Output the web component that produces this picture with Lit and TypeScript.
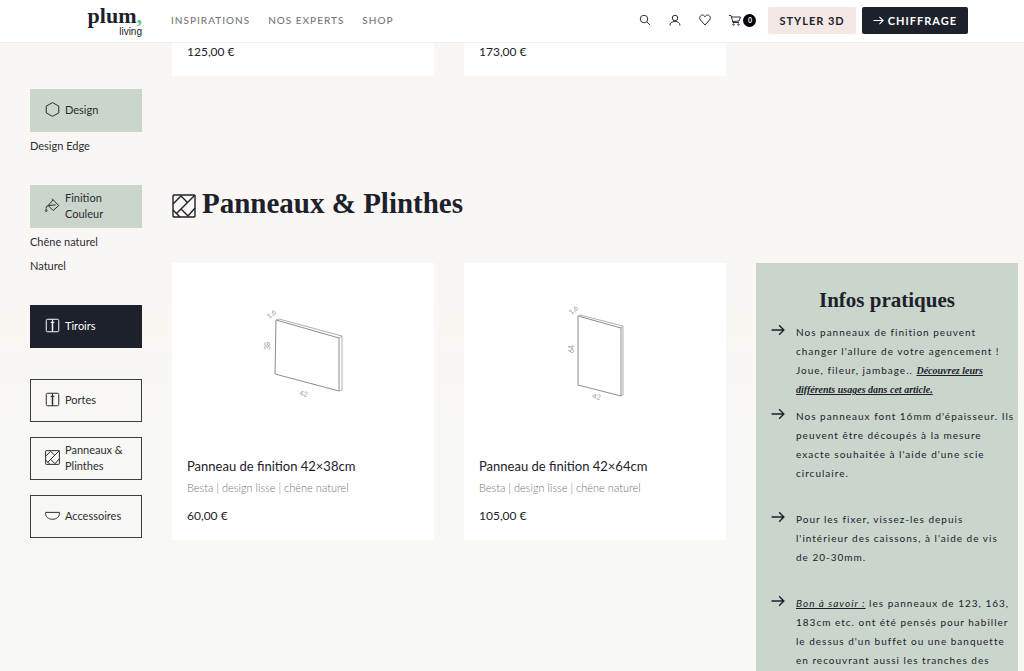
import { LitElement, html, css, svg } from "lit";
import { customElement } from "lit/decorators.js";
import { classMap } from "lit/directives/class-map.js";

const icons = {
  hexagon: svg`<path d="M12 1 22 6.500V17.500L12 23 2 17.500V6.500Z"/>`,
  bucket: svg`<path d="M13 3 22 12 13 20 5 12ZM13 3 11 1M5 12 17 11M6 12 2 14v3"/><circle cx="2" cy="20" r="1.500"/>`,
  door: svg`<rect x="2" y="2" width="20" height="20" rx="2"/><path d="M12 2v20M9 7h6M12 5v7" /><path d="M12 5v15" stroke-width="2.400"/>`,
  panel: svg`<rect x="1" y="1" width="22" height="22" rx="1"/><path d="M1 10 9 2 15 8M23 1 4 20M1 16 8 23M9 15 16 22 23 14"/>`,
  bowl: svg`<path d="M1 7H23V9C23 14 19 18 12 18S1 14 1 9Z"/>`,
  search: svg`<circle cx="10" cy="10" r="7.500"/><path d="m16 16 6 6"/>`,
  user: svg`<circle cx="12" cy="8" r="5.500"/><path d="M2 23c0-6 5-8 10-8s10 2 10 8"/>`,
  heart: svg`<path d="M12 22 3 12C-1 7 3 2 7 2c3 0 4 2 5 4 1-2 2-4 5-4 4 0 8 5 4 10Z"/>`,
  cart: svg`<path d="M0 3h4l4 14h12M5 6h18l-3 8-13 1"/><circle cx="9" cy="21" r="1.500"/><circle cx="19" cy="21" r="1.500"/>`,
  arrow: svg`<path d="M1 12H22M14 4 22 12 14 20"/>`,
};

type IconName = keyof typeof icons;

const icon = (name: IconName) =>
  html`<svg class="icon" viewBox="0 0 24 24" aria-hidden="true">${icons[name]}</svg>`;

interface Product {
  title: string;
  detail: string;
  price: string;
  front: string;
  side: string;
  labels: { text: string; x: number; y: number; turn: number }[];
}

const products: Product[] = [
  {
    title: "Panneau de finition 42×38cm",
    detail: "Besta | design lisse | chêne naturel",
    price: "60,00 €",
    front: "M104 57 167 75V128L103 111Z",
    side: "M104 57 107 56 170 73V127L167 128M167 75 170 73",
    labels: [
      { text: "1,6", x: 101, y: 53, turn: -40 },
      { text: "38", x: 98, y: 83, turn: -90 },
      { text: "42", x: 131, y: 133, turn: 15 },
    ],
  },
  {
    title: "Panneau de finition 42×64cm",
    detail: "Besta | design lisse | chêne naturel",
    price: "105,00 €",
    front: "M114 53 157 65V133L114 122Z",
    side: "M114 53 116 52 159 63V132L157 133M157 65 159 63",
    labels: [
      { text: "1,6", x: 111, y: 49, turn: -40 },
      { text: "64", x: 110, y: 86, turn: -90 },
      { text: "42", x: 132, y: 136, turn: 15 },
    ],
  },
];

@customElement("app-root")
export class AppRoot extends LitElement {
  static styles = css`
    :host {
      display: flex;
      flex-direction: column;
      height: 100vh;
      overflow: hidden;
      font-family: Lato, "Open Sans", sans-serif;
      font-size: 11px;
      color: #1c212b;
      background: linear-gradient(#faf6f3 45%, #f8f8f4 65%);
    }
    * { box-sizing: border-box; }
    a { color: inherit; text-decoration: none; }
    h2, h3, p, ul { margin: 0; padding: 0; }
    ul { list-style: none; }
    .icon {
      flex: none;
      width: 15px;
      height: 15px;
      fill: none;
      stroke: currentColor;
      stroke-width: 1.6;
      overflow: visible;
    }

    .header {
      flex: none;
      display: flex;
      align-items: center;
      height: 43px;
      padding: 0 56px 2px 89px;
      background: #fff;
      border-bottom: 1px solid #eeeeee;
    }
    .logo {
      display: flex;
      flex-direction: column;
      align-items: flex-end;
      width: 53px;
      margin-right: 29px;
    }
    .wordmark {
      font: bold 22px/24px "Liberation Serif", serif;
      white-space: nowrap;
    }
    .comma { color: #6dbfa4; }
    .living { font: 10px/8px "Liberation Sans", sans-serif; }
    .menu { display: flex; gap: 18px; flex: 1; }
    .menu a { font-size: 10px; font-weight: 500; letter-spacing: 1px; color: #77777a; white-space: nowrap; }
    .tools { display: flex; align-items: center; gap: 18px; margin-right: 12px; }
    .tool {
      display: flex;
      align-items: center;
      gap: 2px;
      padding: 0;
      border: 0;
      background: none;
      color: #2c2f36;
    }
    .tool .icon { width: 12px; height: 12px; stroke-width: 2; }
    .count {
      width: 13px;
      border-radius: 50%;
      background: #000;
      color: #fff;
      font: bold 7px/13px Lato, sans-serif;
      text-align: center;
    }
    .cta {
      display: flex;
      align-items: center;
      gap: 4px;
      height: 27px;
      padding: 0 11px;
      border-radius: 2px;
      background: #f4e8e6;
      font-size: 11px;
      font-weight: bold;
      letter-spacing: 1px;
      white-space: nowrap;
    }
    .cta.dark { margin-left: 6px; background: #1c212b; color: #fff; }
    .cta .icon { width: 11px; height: 11px; stroke-width: 2.4; }

    .page {
      flex: 1;
      display: grid;
      grid-template-columns: 112px minmax(0, 1fr);
      gap: 30px;
      padding: 0 6px 0 30px;
    }
    .side { padding-top: 46px; color: #2a2d33; }
    .group { margin-bottom: 27px; }
    .group li { line-height: 24px; }
    .group ul { padding-top: 2px; }
    .tile {
      display: flex;
      align-items: center;
      gap: 5px;
      height: 43px;
      padding: 0 14px 2px;
      line-height: 16px;
      border: 1px solid #3a3d44;
    }
    .tile.green { background: #cad6cc; border-color: #cad6cc; }
    .tile.dark { background: #1c212b; border-color: #1c212b; color: #fff; }
    .links { display: flex; flex-direction: column; gap: 15px; padding-top: 4px; }

    .row { display: grid; grid-template-columns: repeat(3, minmax(0, 1fr)); gap: 30px; align-items: start; }
    .card { background: #fff; padding: 0 15px 14px; }
    .card.tail { padding-bottom: 15px; }
    .drawing { display: block; height: 192px; margin: 0 auto; overflow: visible; fill: none; }
    .front { stroke: #8d8d8d; }
    .edge { stroke: #b0b0b0; }
    .dim { fill: #999; font: 7px Lato, sans-serif; text-anchor: middle; }
    .name { font-size: 13px; line-height: 23px; font-weight: normal; white-space: nowrap; }
    .detail { font-size: 11px; line-height: 20px; font-weight: 300; color: #74747e; white-space: nowrap; }
    .price { font-size: 12px; line-height: 20px; }
    .name + .detail + .price { margin-top: 8px; }
    .card.tail .price { line-height: 18px; }

    .heading {
      display: flex;
      align-items: center;
      gap: 6px;
      margin: 106px 0 39px;
      font: bold 29px/42px "Liberation Serif", serif;
    }
    .heading .icon { width: 24px; height: 24px; margin-top: 6px; stroke-width: 1.4; }

    .info { background: #cad6cc; padding: 22px 4px 0 15px; }
    .info h3 { margin: 0 11px 8px 0; font: bold 21px/30px "Liberation Serif", serif; text-align: center; }
    .info li { display: flex; gap: 11px; margin-bottom: 27px; font-size: 10px; line-height: 19px; letter-spacing: 1px; white-space: nowrap; }
    .info li.tight { margin-bottom: 8px; }
    .info .icon { width: 14px; height: 14px; stroke-width: 2.4; }
    .info a { font-family: "Liberation Serif", serif; font-style: italic; font-weight: bold; letter-spacing: 0; text-decoration: underline; }
    .note { font-style: italic; text-decoration: underline; }
  `;

  private tile(name: IconName, label: unknown, cls = "") {
    return html`<a href="#" class=${classMap({ tile: true, green: cls === "green", dark: cls === "dark" })}>
      ${icon(name)}<span>${label}</span></a>`;
  }

  private card(p: Product) {
    return html`<article class="card">
      <svg class="drawing" viewBox="15 0 232 192" role="img" aria-label=${p.title}>
        <path class="front" d=${p.front} /><path class="edge" d=${p.side} />
        ${p.labels.map((l) => svg`<text class="dim" x=${l.x} y=${l.y} transform="rotate(${l.turn} ${l.x} ${l.y})">${l.text}</text>`)}
      </svg>
      <h3 class="name">${p.title}</h3>
      <p class="detail">${p.detail}</p>
      <p class="price">${p.price}</p>
    </article>`;
  }

  render() {
    return html`
      <header class="header">
        <a class="logo" href="#"><span class="wordmark">plum<span class="comma">,</span></span><span class="living">living</span></a>
        <nav class="menu"><a href="#">INSPIRATIONS</a><a href="#">NOS EXPERTS</a><a href="#">SHOP</a></nav>
        <div class="tools">
          <button class="tool" aria-label="Rechercher">${icon("search")}</button>
          <button class="tool" aria-label="Compte">${icon("user")}</button>
          <button class="tool" aria-label="Favoris">${icon("heart")}</button>
          <button class="tool" aria-label="Panier">${icon("cart")}<span class="count">0</span></button>
        </div>
        <a class="cta" href="#">STYLER 3D</a>
        <a class="cta dark" href="#">${icon("arrow")}CHIFFRAGE</a>
      </header>
      <div class="page">
        <aside class="side">
          <div class="group">${this.tile("hexagon", "Design", "green")}<ul><li>Design Edge</li></ul></div>
          <div class="group">
            ${this.tile("bucket", html`Finition<br />Couleur`, "green")}
            <ul><li>Chêne naturel</li><li>Naturel</li></ul>
          </div>
          <div class="group">${this.tile("door", "Tiroirs", "dark")}</div>
          <nav class="links">
            ${this.tile("door", "Portes")}
            ${this.tile("panel", html`Panneaux &amp; Plinthes`)}
            ${this.tile("bowl", "Accessoires")}
          </nav>
        </aside>
        <main>
          <div class="row">
            <article class="card tail"><p class="price">125,00 €</p></article>
            <article class="card tail"><p class="price">173,00 €</p></article>
          </div>
          <h2 class="heading">${icon("panel")}Panneaux &amp; Plinthes</h2>
          <div class="row">
            ${products.map((p) => this.card(p))}
            <section class="info">
              <h3>Infos pratiques</h3>
              <ul>
                <li class="tight">${icon("arrow")}<span>Nos panneaux de finition peuvent<br />changer l'allure de votre agencement !<br />Joue, fileur, jambage.. <a href="#">Découvrez leurs<br />différents usages dans cet article.</a></span></li>
                <li>${icon("arrow")}<span>Nos panneaux font 16mm d'épaisseur. Ils<br />peuvent être découpés à la mesure<br />exacte souhaitée à l'aide d'une scie<br />circulaire.</span></li>
                <li>${icon("arrow")}<span>Pour les fixer, vissez-les depuis<br />l'intérieur des caissons, à l'aide de vis<br />de 20-30mm.</span></li>
                <li>${icon("arrow")}<span><span class="note">Bon à savoir :</span> les panneaux de 123, 163,<br />183cm etc. ont été pensés pour habiller<br />le dessus d'un buffet ou une banquette<br />en recouvrant aussi les tranches des</span></li>
              </ul>
            </section>
          </div>
        </main>
      </div>
    `;
  }
}
